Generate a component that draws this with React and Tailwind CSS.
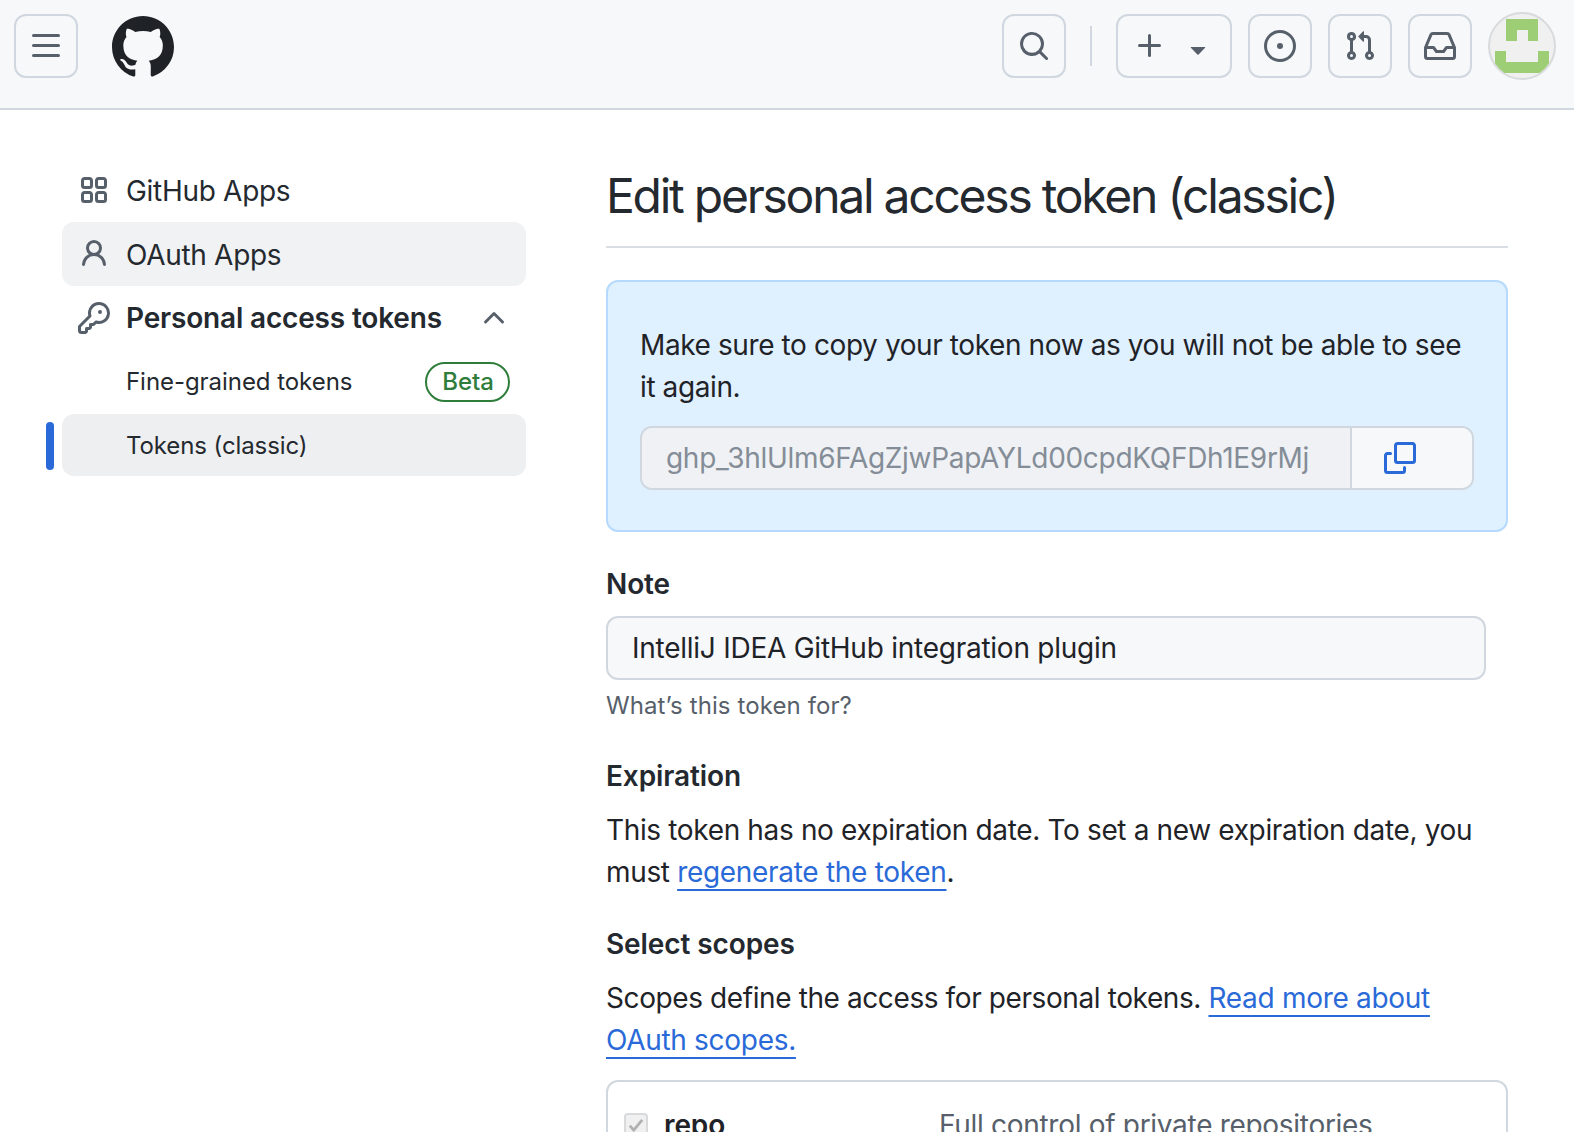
const icons = {
  bars: "M1 2.75A.75.75 0 0 1 1.75 2h12.5a.75.75 0 0 1 0 1.5H1.75A.75.75 0 0 1 1 2.75Zm0 5A.75.75 0 0 1 1.75 7h12.5a.75.75 0 0 1 0 1.5H1.75A.75.75 0 0 1 1 7.75ZM1.75 12h12.5a.75.75 0 0 1 0 1.5H1.75a.75.75 0 0 1 0-1.5Z",
  github: "M8 0c4.42 0 8 3.58 8 8a8.013 8.013 0 0 1-5.45 7.59c-.4.08-.55-.17-.55-.38 0-.27.01-1.13.01-2.2 0-.75-.25-1.23-.54-1.48 1.78-.2 3.65-.88 3.65-3.95 0-.88-.31-1.59-.82-2.15.08-.2.36-1.02-.08-2.12 0 0-.67-.22-2.2.82-.64-.18-1.32-.27-2-.27-.68 0-1.36.09-2 .27-1.53-1.03-2.2-.82-2.2-.82-.44 1.1-.16 1.92-.08 2.12-.51.56-.82 1.28-.82 2.15 0 3.06 1.86 3.75 3.64 3.95-.23.2-.44.55-.51 1.07-.46.21-1.61.55-2.33-.66-.15-.24-.6-.83-1.23-.82-.67.01-.27.38.01.53.34.19.73.9.82 1.13.16.45.68 1.31 2.69.94 0 .67.01 1.3.01 1.49 0 .21-.15.45-.55.38A7.995 7.995 0 0 1 0 8c0-4.42 3.58-8 8-8Z",
  search: "M10.68 11.74a6 6 0 0 1-7.922-8.982 6 6 0 0 1 8.982 7.922l3.04 3.04a.749.749 0 0 1-.326 1.275.749.749 0 0 1-.734-.215ZM11.5 7a4.499 4.499 0 1 0-8.997 0A4.499 4.499 0 0 0 11.5 7Z",
  plus: "M7.75 2a.75.75 0 0 1 .75.75V7h4.25a.75.75 0 0 1 0 1.5H8.5v4.25a.75.75 0 0 1-1.5 0V8.5H2.75a.75.75 0 0 1 0-1.5H7V2.75A.75.75 0 0 1 7.75 2Z",
  caret: "m4.427 7.427 3.396 3.396a.25.25 0 0 0 .354 0l3.396-3.396A.25.25 0 0 0 11.396 7H4.604a.25.25 0 0 0-.177.427Z",
  issue: "M8 9.5a1.5 1.5 0 1 0 0-3 1.5 1.5 0 0 0 0 3ZM8 0a8 8 0 1 1 0 16A8 8 0 0 1 8 0ZM1.5 8a6.5 6.5 0 1 0 13 0 6.5 6.5 0 0 0-13 0Z",
  pull: "M1.5 3.25a2.25 2.25 0 1 1 3 2.122v5.256a2.251 2.251 0 1 1-1.5 0V5.372A2.25 2.25 0 0 1 1.5 3.25Zm5.677-.177L9.573.677A.25.25 0 0 1 10 .854V2.5h1A2.5 2.5 0 0 1 13.5 5v5.628a2.251 2.251 0 1 1-1.5 0V5a1 1 0 0 0-1-1h-1v1.646a.25.25 0 0 1-.427.177L7.177 3.427a.25.25 0 0 1 0-.354ZM3.75 2.5a.75.75 0 1 0 0 1.5.75.75 0 0 0 0-1.5Zm0 9.5a.75.75 0 1 0 0 1.5.75.75 0 0 0 0-1.5Zm8.25.75a.75.75 0 1 0 1.5 0 .75.75 0 0 0-1.5 0Z",
  inbox: "M2.8 2.06A1.75 1.75 0 0 1 4.41 1h7.18c.7 0 1.333.417 1.61 1.06l2.74 6.395c.04.093.06.194.06.295v4.5A1.75 1.75 0 0 1 14.25 15H1.75A1.75 1.75 0 0 1 0 13.25v-4.5c0-.101.02-.202.06-.295Zm1.61.44a.25.25 0 0 0-.23.152L1.887 8H4.75a.75.75 0 0 1 .6.3L6.625 10h2.75l1.275-1.7a.75.75 0 0 1 .6-.3h2.863L11.82 2.652a.25.25 0 0 0-.23-.152Zm10.09 7h-2.875l-1.275 1.7a.75.75 0 0 1-.6.3h-3.5a.75.75 0 0 1-.6-.3L4.375 9.5H1.5v3.75c0 .138.112.25.25.25h12.5a.25.25 0 0 0 .25-.25Z",
  copy: "M0 6.75C0 5.784.784 5 1.75 5h1.5a.75.75 0 0 1 0 1.5h-1.5a.25.25 0 0 0-.25.25v7.5c0 .138.112.25.25.25h7.5a.25.25 0 0 0 .25-.25v-1.5a.75.75 0 0 1 1.5 0v1.5A1.75 1.75 0 0 1 9.25 16h-7.5A1.75 1.75 0 0 1 0 14.25ZM5 1.75C5 .784 5.784 0 6.75 0h7.5C15.216 0 16 .784 16 1.75v7.5A1.75 1.75 0 0 1 14.25 11h-7.5A1.75 1.75 0 0 1 5 9.25Zm1.75-.25a.25.25 0 0 0-.25.25v7.5c0 .138.112.25.25.25h7.5a.25.25 0 0 0 .25-.25v-7.5a.25.25 0 0 0-.25-.25Z",
  apps: "M1.5 3.25c0-.966.784-1.75 1.75-1.75h2.5c.966 0 1.75.784 1.75 1.75v2.5A1.75 1.75 0 0 1 5.75 7.5h-2.5A1.75 1.75 0 0 1 1.5 5.75Zm7 0c0-.966.784-1.75 1.75-1.75h2.5c.966 0 1.75.784 1.75 1.75v2.5a1.75 1.75 0 0 1-1.75 1.75h-2.5a1.75 1.75 0 0 1-1.75-1.75Zm-7 7c0-.966.784-1.75 1.75-1.75h2.5c.966 0 1.75.784 1.75 1.75v2.5a1.75 1.75 0 0 1-1.75 1.75h-2.5a1.75 1.75 0 0 1-1.75-1.75Zm7 0c0-.966.784-1.75 1.75-1.75h2.5c.966 0 1.75.784 1.75 1.75v2.5a1.75 1.75 0 0 1-1.75 1.75h-2.5a1.75 1.75 0 0 1-1.75-1.75ZM3.25 3a.25.25 0 0 0-.25.25v2.5c0 .138.112.25.25.25h2.5A.25.25 0 0 0 6 5.75v-2.5A.25.25 0 0 0 5.75 3Zm7 0a.25.25 0 0 0-.25.25v2.5c0 .138.112.25.25.25h2.5a.25.25 0 0 0 .25-.25v-2.5a.25.25 0 0 0-.25-.25ZM3 10.25v2.5c0 .138.112.25.25.25h2.5a.25.25 0 0 0 .25-.25v-2.5a.25.25 0 0 0-.25-.25h-2.5a.25.25 0 0 0-.25.25Zm7.25-.25a.25.25 0 0 0-.25.25v2.5c0 .138.112.25.25.25h2.5a.25.25 0 0 0 .25-.25v-2.5a.25.25 0 0 0-.25-.25Z",
  person: "M10.561 8.073a6.005 6.005 0 0 1 3.432 5.142.75.75 0 1 1-1.498.07 4.5 4.5 0 0 0-8.99 0 .75.75 0 1 1-1.498-.07 6.004 6.004 0 0 1 3.431-5.142 3.999 3.999 0 1 1 5.123 0ZM10.5 5a2.5 2.5 0 1 0-5 0 2.5 2.5 0 0 0 5 0Z",
  key: "M10.5 0a5.499 5.499 0 1 1-1.288 10.848l-.932.932a.749.749 0 0 1-.53.22H7v.75a.749.749 0 0 1-.22.53l-.5.5a.749.749 0 0 1-.53.22H5v.75a.749.749 0 0 1-.22.53l-.5.5a.749.749 0 0 1-.53.22h-2A1.75 1.75 0 0 1 0 14.25v-2c0-.199.079-.389.22-.53l4.932-4.932A5.5 5.5 0 0 1 10.5 0Zm-4 5.5c-.001.431.069.86.205 1.269a.75.75 0 0 1-.181.768L1.5 12.56v1.69c0 .138.112.25.25.25h1.69l.06-.06v-1.19a.75.75 0 0 1 .75-.75h1.19l.06-.06v-1.19a.75.75 0 0 1 .75-.75h1.19l1.023-1.025a.75.75 0 0 1 .768-.175A4 4 0 1 0 6.5 5.5ZM11 6a1 1 0 1 1 0-2 1 1 0 0 1 0 2Z",
  chevronUp: "M3.22 10.53a.749.749 0 0 1 0-1.06l4.25-4.25a.749.749 0 0 1 1.06 0l4.25 4.25a.749.749 0 0 1-1.06 1.06L8 6.811 4.28 10.53a.749.749 0 0 1-1.06 0Z",
};

function Octicon({ name, size = 32, className = "" }) {
  return (
    <svg viewBox="0 0 16 16" width={size} height={size} fill="currentColor" className={className}>
      <path d={icons[name]} />
    </svg>
  );
}

function HeaderButton({ children, className = "w-16" }) {
  return (
    <button className={`h-16 ${className} flex items-center justify-center rounded-xl border-2 border-[#d0d7de] text-[#57606a]`}>
      {children}
    </button>
  );
}

function Avatar() {
  return (
    <div className="w-[68px] h-[68px] rounded-full border-2 border-[#d8dadc] bg-[#f0f0f0] overflow-hidden -mt-[2px] ml-4 shrink-0">
      <svg viewBox="0 0 64 64" width="64" height="64" fill="#9dce75">
        <path d="M16 5h32v22H38V16H27v11H16z" />
        <path d="M5 37h11v11h32V37h11v22H5z" />
      </svg>
    </div>
  );
}

function SideItem({ icon, active, children }) {
  return (
    <div className={`h-16 flex items-center rounded-xl ${active ? "bg-[#f1f2f4]" : ""}`}>
      <span className="w-16 flex justify-center text-[#57606a] shrink-0">
        <Octicon name={icon} />
      </span>
      <span className="text-[28px] tracking-[-0.3px] text-[#24292f] mt-[1px]">{children}</span>
    </div>
  );
}

function Label({ children, className = "" }) {
  return <div className={`text-[28px] leading-[36px] font-semibold tracking-[-0.1px] text-[#24292f] ${className}`}>{children}</div>;
}

function TextLink({ children }) {
  return <a className="text-[#2a6ad8] tracking-[-0.3px] underline underline-offset-[7px] decoration-2">{children}</a>;
}

export default function App() {
  return (
    <div className="h-[1132px] overflow-hidden bg-white font-['Inter',sans-serif]">
      <header className="h-[110px] bg-[#f6f8fa] border-b-2 border-[#d0d7de] flex items-start pt-[14px] pl-[14px] pr-[18px]">
        <HeaderButton>
          <Octicon name="bars" />
        </HeaderButton>
        <Octicon name="github" size={62} className="ml-[34px] mt-[2px] text-[#1f2328]" />
        <div className="flex-1" />
        <HeaderButton>
          <Octicon name="search" />
        </HeaderButton>
        <div className="w-[2px] h-10 bg-[#d0d7de] mt-3 mx-6" />
        <HeaderButton className="w-[116px] gap-4">
          <Octicon name="plus" />
          <Octicon name="caret" className="mt-[6px]" />
        </HeaderButton>
        <div className="flex gap-4 ml-4">
          <HeaderButton>
            <Octicon name="issue" />
          </HeaderButton>
          <HeaderButton>
            <Octicon name="pull" />
          </HeaderButton>
          <HeaderButton>
            <Octicon name="inbox" />
          </HeaderButton>
        </div>
        <Avatar />
      </header>

      <div className="flex">
        <aside className="w-[606px] pt-[48px] pl-[62px] pr-[80px] shrink-0">
          <SideItem icon="apps">GitHub Apps</SideItem>
          <SideItem icon="person" active>OAuth Apps</SideItem>
          <div className="h-16 flex items-center">
            <span className="w-16 flex justify-center text-[#57606a] shrink-0">
              <Octicon name="key" />
            </span>
            <span className="flex-1 text-[28px] font-semibold tracking-[-0.17px] text-[#24292f]">Personal access tokens</span>
            <Octicon name="chevronUp" className="text-[#57606a] mr-4" />
          </div>
          <div className="h-16 flex items-center pl-16 pr-4">
            <span className="flex-1 text-[24px] tracking-[-0.05px] text-[#24292f]">Fine-grained tokens</span>
            <span className="h-10 pl-[15px] pr-[14px] flex items-center rounded-full border-2 border-[#2f7d3b] text-[24px] font-medium text-[#2f7d3b]">Beta</span>
          </div>
          <div className="relative h-[62px] flex items-center pl-16 rounded-xl bg-[#eeeff1]">
            <span className="absolute -left-4 top-2 w-2 h-12 rounded-md bg-[#2a6ad8]" />
            <span className="text-[24px] tracking-[-0.1px] text-[#24292f] mt-[1px]">Tokens (classic)</span>
          </div>
        </aside>

        <main className="w-[902px] pt-[48px] shrink-0">
          <h1 className="h-[90px] text-[48px] leading-[76px] tracking-[-2.25px] text-[#24292f] border-b-2 border-[#d8dee4]">Edit personal access token (classic)</h1>
          <section className="mt-[32px] h-[252px] rounded-xl border-2 border-[#b6dafd] bg-[#dff0ff] px-[32px] pt-[42px]">
            <p className="text-[28px] leading-[42px] tracking-[-0.4px] text-[#1f2328]">Make sure to copy your token now as you will not be able to see it again.</p>
            <div className="mt-[18px] h-[64px] flex rounded-xl border-2 border-[#d0d7de] overflow-hidden">
              <div className="flex-1 flex items-center px-6 bg-[#eff1f4] text-[28px] tracking-[-0.3px] text-[#848d97] whitespace-nowrap">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</div>
              <div className="w-[122px] border-l-2 border-[#d0d7de] bg-[#f6f8fa] flex items-center pl-[32px] text-[#2a6ad8]">
                <Octicon name="copy" />
              </div>
            </div>
          </section>

          <Label className="mt-[34px]">Note</Label>
          <div className="mt-[14px] w-[880px] h-16 flex items-center px-6 rounded-xl border-2 border-[#d0d7de] bg-[#f6f8fa] text-[28px] tracking-[-0.25px] text-[#1f2328]">IntelliJ IDEA GitHub integration plugin</div>
          <p className="mt-[8px] text-[24px] leading-[36px] tracking-[0.1px] text-[#57606a]">What’s this token for?</p>

          <Label className="mt-[34px]">Expiration</Label>
          <p className="mt-[15px] text-[28px] leading-[42px] tracking-[-0.35px] text-[#1f2328]">
            This token has no expiration date. To set a new expiration date, you must <TextLink>regenerate the token</TextLink>.
          </p>

          <Label className="mt-[33px]">Select scopes</Label>
          <p className="mt-[15px] text-[28px] leading-[42px] tracking-[-0.4px] text-[#1f2328]">
            Scopes define the access for personal tokens. <TextLink>Read more about OAuth scopes.</TextLink>
          </p>

          <div className="mt-[19px] h-[120px] rounded-t-xl border-2 border-[#d0d7de] flex items-start pt-[22px] pl-[16px]">
            <span className="w-6 h-6 mt-[9px] rounded border-2 border-[#d8dadc] bg-[#f0f0f0] flex items-center justify-center text-[#b0b0b0]">
              <svg viewBox="0 0 16 16" width="18" height="18" fill="none" stroke="currentColor" strokeWidth="2.5"><path d="M2.5 8.5l3.5 4 7.5-9" /></svg>
            </span>
            <span className="ml-4 w-[275px] text-[28px] font-semibold tracking-[-0.1px] text-[#1f2328]">repo</span>
            <span className="text-[28px] tracking-[-0.3px] text-[#57606a]">Full control of private repositories</span>
          </div>
        </main>
      </div>
    </div>
  );
}
